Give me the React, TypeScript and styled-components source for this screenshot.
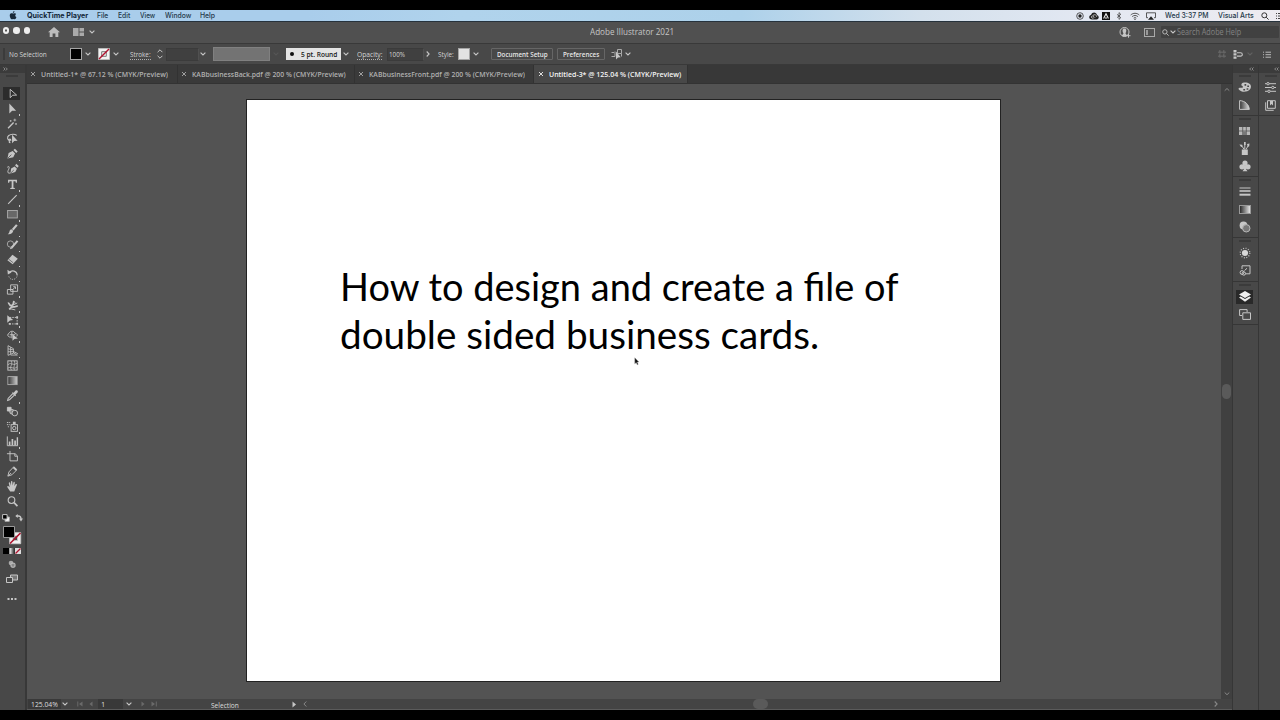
import React, { ReactNode, useLayoutEffect, useRef, useState } from 'react';
import styled, { createGlobalStyle, css } from 'styled-components';

const Global = createGlobalStyle`
  * { box-sizing: border-box; }
  html, body { margin: 0; background: #000; }
  body { width: 1280px; height: 720px; overflow: hidden; font-family: "Open Sans", "Liberation Sans", sans-serif; }
  svg { display: block; flex: none; }
`;

const ui = '"Open Sans", "Liberation Sans", sans-serif';
const system = 'Inter, "Liberation Sans", sans-serif';

/* ---------- text that is set to a fixed measure ---------- */
const Measure = styled.span<{ $w: number }>`
  display: block;
  flex: none;
  width: ${(p) => p.$w}px;
  white-space: nowrap;
`;
const Stretch = styled.span`
  display: inline-block;
  transform-origin: 0 50%;
`;
function Fit({ width, children }: { width: number; children: ReactNode }) {
  const ref = useRef<HTMLSpanElement>(null);
  const [scale, setScale] = useState(1);
  useLayoutEffect(() => {
    if (ref.current) setScale(width / ref.current.offsetWidth);
  }, [width, children]);
  return (
    <Measure $w={width}>
      <Stretch ref={ref} style={{ transform: `scaleX(${scale})` }}>{children}</Stretch>
    </Measure>
  );
}

/* ---------- frame ---------- */
const Screen = styled.div`
  width: 1280px;
  height: 720px;
  padding: 10px 0;
  background: #000;
  overflow: hidden;
`;
const Desktop = styled.div`
  height: 700px;
  display: flex;
  flex-direction: column;
  background: #484848;
`;
const Bar = styled.div`
  display: flex;
  align-items: center;
  flex: none;
  overflow: hidden;
`;
const MenuBar = styled(Bar)`
  height: 12px;
  padding: 0 0 0 9px;
  font: 500 7.3px/10px ${system};
  color: #24384a;
  background: linear-gradient(90deg, #a9cdeb 0, #a9cdeb 24%, #b0d3ec 36%, #add1ea 58%, #d3e0ec 72%, #e3e8f2 85%, #edebf0 100%);
  border-bottom: 1px solid #26323c;
`;
const TitleBar = styled(Bar)`
  height: 22px;
  padding: 0 0 1px 3px;
  background: #505050;
  border-bottom: 1px solid #393939;
  color: #c6c6c6;
  font: 400 8.6px/12px ${ui};
`;
const ControlBar = styled(Bar)`
  height: 21px;
  padding-left: 3px;
  background: #484848;
  border-bottom: 1px solid #393939;
  color: #d4d4d4;
  font: 500 7.5px/10px ${ui};
`;
const Slot = styled.div<{ $w: number; $pad?: number }>`
  flex: none;
  display: flex;
  align-items: center;
  width: ${(p) => p.$w}px;
  padding-left: ${(p) => p.$pad ?? 0}px;
`;
const Spacer = styled.div`
  flex: 1;
`;
const Strong = styled.b`
  font-weight: 700;
  color: #14283a;
`;
const Light = styled.i<{ $dot?: boolean }>`
  width: 6.4px;
  height: 6.4px;
  margin: 0 3.9px 3px 0;
  border-radius: 50%;
  background: ${(p) => (p.$dot ? 'radial-gradient(circle, #555 0 .8px, #efefef 1.4px)' : '#ededed')};
`;
const SearchBox = styled.div`
  display: flex;
  align-items: center;
  width: 118px;
  height: 12px;
  padding-left: 1px;
  background: #414141;
  border-radius: 1px;
  color: #838383;
`;

/* ---------- control bar parts ---------- */
const Swatch = styled.div<{ $color: string }>`
  width: 12px;
  height: 12px;
  background: ${(p) => p.$color};
  border: 1px solid #a5a5a5;
  flex: none;
`;
const Field = styled.div<{ $w: number }>`
  width: ${(p) => p.$w}px;
  height: 13px;
  line-height: 11px;
  padding-left: 1px;
  flex: none;
  background: #404040;
  border: 1px solid #3b3b3b;
  border-right-color: #505050;
`;
const Profile = styled.div`
  width: 57px;
  height: 14px;
  background: #737373;
  border: 1px solid #808080;
`;
const Brush = styled.div`
  display: flex;
  align-items: center;
  width: 55px;
  height: 12px;
  padding-left: 4px;
  background: #e4e4e4;
  color: #161616;
  font-weight: 600;
  gap: 7px;
  &::before { content: ''; width: 4px; height: 4px; border-radius: 50%; background: #111; }
`;
const Underlined = styled.span`
  display: block;
  margin-top: 1px;
  border-bottom: 1px dotted #b0b0b0;
  line-height: 9px;
`;
const PushButton = styled.div<{ $w: number }>`
  flex: none;
  display: flex;
  align-items: center;
  justify-content: center;
  width: ${(p) => p.$w}px;
  height: 12px;
  margin-right: 4px;
  border: 1px solid #666;
  border-radius: 1px;
  color: #e6e6e6;
  font-weight: 600;
`;
const Grip = styled.i<{ $vertical?: boolean }>`
  display: block;
  flex: none;
  background: #3b3b3b;
  ${(p) => (p.$vertical ? css`width: 2px; height: 12px;` : css`width: 12px; height: 2px;`)}
`;

/* ---------- workspace ---------- */
const Workspace = styled.div`
  flex: 1;
  min-height: 0;
  display: flex;
`;
const Toolbox = styled.div`
  width: 27px;
  flex: none;
  background: #484848;
  border-right: 2px solid #383838;
`;
const DockHead = styled.div`
  height: 8px;
  display: flex;
  align-items: center;
  justify-content: flex-end;
  background: #3b3b3b;
`;
const GripRow = styled.div<{ $h: number; $shift?: number }>`
  height: ${(p) => p.$h}px;
  padding: 2px 0 0 ${(p) => p.$shift ?? 0}px;
`;
const Tool = styled.div<{ $active?: boolean }>`
  position: relative;
  width: 18px;
  height: 15.15px;
  margin-left: 3px;
  display: flex;
  align-items: center;
  justify-content: center;
  background: ${(p) => (p.$active ? 'linear-gradient(#2c2c2c, #2c2c2c) 0 1px / 17px 13px no-repeat' : 'none')};
`;
const Corner = styled.i`
  position: absolute;
  right: 1px;
  bottom: 0;
  width: 1.5px;
  height: 1.5px;
  background: #c8c8c8;
`;
const ColorArea = styled.div`
  display: flex;
  flex-direction: column;
`;
const ColorRow = styled.div<{ $h: number; $pad: number }>`
  display: flex;
  align-items: center;
  height: ${(p) => p.$h}px;
  padding-left: ${(p) => p.$pad}px;
`;
const Document = styled.div`
  width: 1205px;
  flex: none;
  display: flex;
  flex-direction: column;
`;
const Tabs = styled.div`
  height: 19px;
  flex: none;
  display: flex;
  background: #383838;
  border-bottom: 1px solid #333;
`;
const Tab = styled.div<{ $w: number; $active?: boolean }>`
  flex: none;
  display: flex;
  align-items: center;
  width: ${(p) => p.$w}px;
  padding: 0 0 1px ${(p) => (p.$active ? 4 : 3)}px;
  gap: 5px;
  border-right: 1px solid #323232;
  background: ${(p) => (p.$active ? '#484848' : '#3a3a3a')};
  color: ${(p) => (p.$active ? '#f4f4f4' : '#b0b0b0')};
  font: 600 7.2px/10px ${ui};
`;
const View = styled.div`
  flex: 1;
  min-height: 0;
  display: flex;
`;
const Pasteboard = styled.div`
  width: 1194px;
  padding: 15px 0 0 219px;
  background: #535353;
`;
const Artboard = styled.div`
  position: relative;
  width: 755px;
  height: 583px;
  padding: 162px 0 0 93px;
  background: #fff;
  border: 1px solid #222;
`;
const Headline = styled.div`
  color: #000;
  font: 400 39px/48px Lato, "Noto Sans", sans-serif;
`;
const Pointer = styled.div`
  position: absolute;
  left: 387px;
  top: 257px;
`;
const VScroll = styled.div`
  width: 11px;
  display: flex;
  flex-direction: column;
  align-items: center;
  justify-content: space-between;
  padding: 3px 0;
  background: #404040;
`;
const Thumb = styled.div<{ $w: number; $h: number }>`
  width: ${(p) => p.$w}px;
  height: ${(p) => p.$h}px;
  flex: none;
  border-radius: 5px;
  background: #5a5a5a;
`;
const Status = styled(Bar)`
  height: 11px;
  background: #444;
  border-bottom: 1px solid #5b5b5b;
  color: #ddd;
  font: 500 7.3px/9px ${ui};
`;
const StatusField = styled.div<{ $w: number }>`
  flex: none;
  width: ${(p) => p.$w}px;
  height: 10px;
  padding: 1px 0 0 3px;
  background: #393939;
`;
const StatusItem = styled.div`
  padding-top: 2px;
`;
const Dock = styled.div<{ $w: number }>`
  flex: none;
  width: ${(p) => p.$w}px;
  background: #484848;
  border-left: 1px solid #363636;
`;
const Group = styled.div<{ $h: number; $shift?: number }>`
  display: flex;
  flex-direction: column;
  align-items: center;
  height: ${(p) => p.$h}px;
  padding: 2px 2px 0 ${(p) => p.$shift ?? 0}px;
  border-bottom: 1px solid #363636;
`;
const PanelButton = styled.div<{ $active?: boolean }>`
  display: flex;
  align-items: center;
  justify-content: center;
  width: 17px;
  height: 14px;
  margin-top: 3.7px;
  background: ${(p) => (p.$active ? '#292929' : 'none')};
`;

/* ---------- drawings ---------- */
const C = '#c6c6c6';
function Ico({ w = 14, h = 14, vb, children, color = C }: { w?: number; h?: number; vb?: string; children: ReactNode; color?: string }) {
  return (
    <svg width={w} height={h} viewBox={vb ?? `0 0 ${w} ${h}`} fill="none" stroke={color} strokeWidth="1">
      {children}
    </svg>
  );
}
const F = ({ d, c = C }: { d: string; c?: string }) => <path d={d} fill={c} stroke="none" />;
const Down = ({ c = C }: { c?: string }) => <Ico w={6} h={4} color={c}><path d="M.6.6 3 3 5.4.6" strokeWidth="1.1" /></Ico>;
const Right = ({ c = C }: { c?: string }) => <Ico w={4} h={6} color={c}><path d="M.7.5 3.1 3 .7 5.5" strokeWidth="1.1" /></Ico>;
const Left = ({ c = C }: { c?: string }) => <Ico w={4} h={6} color={c}><path d="M3.3.5.9 3l2.4 2.5" /></Ico>;
const Close = ({ c = C }: { c?: string }) => <Ico w={6} h={6} color={c}><path d="m1 1 4 4M5 1 1 5" strokeWidth=".9" /></Ico>;
const Collapse = () => <Ico w={5} h={4} color="#aaa"><path d="M2.2.5.7 2l1.5 1.5M4.5.5 3 2l1.5 1.5" strokeWidth=".7" /></Ico>;

const tools: { icon: ReactNode; more?: boolean }[] = [
  { icon: <path d="M4.5 2.5v9l2.7-2.6 4.2-.2z" /> },
  { more: true, icon: <F d="M3.6 1.5v10.8l3-2.8 4.3-.1z" /> },
  { icon: <><path d="m2.2 12 6-6" strokeWidth="1.5" /><path d="M9.5 1.8v3M8 3.3h3M5 3.2v2M4 4.2h2M10.8 6.5v2M9.8 7.5h2" strokeWidth=".8" /></> },
  { icon: <><path d="M4.500 9.400C1.400 8.800.9 5.500 3 3.800s6.500-1.900 8.600-.1M4.500 9.400c-1.500.6-1.500 2 .2 2M5 9.500c.8-1.600-1.400-2.500-1.800-1" strokeWidth="1.2" /><F d="M6.500 3v9.200l2.400-2.500 3.600-.2z" /></> },
  { more: true, icon: <><F d="m1.600 12.400 1.200-6 4.400-2.100 2.600 2.700-2 4.100zM8 3.300l1.600-1.500 3 3.100L11 6.400z" /><path d="m2.200 11.800 3.600-3.500" stroke="#444" strokeWidth=".8" /></> },
  { icon: <><F d="m4.800 12.300.7-5.200 3.800-2.300 2.500 2.400-1.800 3.600zM9.800 3.900l1.200-2 2.700 2.500-1.400 1.800z" /><path d="m5.400 11.600 3-3" stroke="#444" strokeWidth=".8" /><path d="M1.300 5.800c3-2.600 2.300 1 1 3.400-1 2 .3 3.700 2.400 2.500" /></> },
  { more: true, icon: <F d="M2.200 2h9.600v3h-1.200l-.4-1.500H8v7l1.500.4v1H4.600v-1l1.500-.4v-7H3.800L3.400 5H2.200z" /> },
  { more: true, icon: <path d="m2.300 11.600 9.200-9.200" strokeWidth="1.2" /> },
  { more: true, icon: <rect x="1.700" y="2.700" width="10.500" height="8" fill="#686868" stroke="#aaa" /> },
  { more: true, icon: <><path d="M11.700 2 7.200 7.300" strokeWidth="2.3" /><F d="m5.800 6.600 2 1.800c-.6 2.700-2.300 3.900-6 3.600 1.200-.6 1.600-1.700 2-3.200.3-1.200 1-2 2-2.200z" /></> },
  { more: true, icon: <><circle cx="4.800" cy="6.500" r="3.400" stroke="#aaa" /><path d="M12.400 3 6 10.600" strokeWidth="2.2" /><F d="m5.200 9.800 1.600 1.400-2.600 1z" /></> },
  { more: true, icon: <><F d="m7 1.800 5.700 4.400-5.500 6-5.700-4.500z" /><path d="m2.700 6.500 5 4" stroke="#444" strokeWidth=".7" /></> },
  { more: true, icon: <><path d="M3.400 5C6.400 1.500 11.700 3.300 12 7.500" strokeWidth="1.2" /><path d="M12 8c-.3 5-7.800 6.100-9 .8" strokeDasharray="1 1.3" /><F d="m1.500 2 .5 5L6 4.900z" /></> },
  { more: true, icon: <path d="M5 2h7.500v7H5zM1.500 7h6v5h-6zM6.800 7.500l3-3M7.800 4h2.400v2.400" /> },
  { more: true, icon: <><path d="M2 4.500c2.300-.6 1.200 3.500 4 2.600C8.400 6.200 8.200 4 8.400 2M4 11.700c0-2.700 2.600-3.400 4.700-3.200 1.900.2 1.700-1 4-.7" strokeWidth="1.8" /><path d="m8.800 3 1.700 1.600M3 10l7 1.800M7.500 6.500l4.600-2.200" /></> },
  { more: true, icon: <><path d="M4 3.700h8v7H4" strokeDasharray="1.7 1" /><F d="M1.400 1.300v8L4.200 7l3.500-.6zM11 2.500h2v2h-2zM11 9.700h2v2h-2zM3 9.700h2v2H3z" /></> },
  { more: true, icon: <><path d="M5.200 8.700C1.600 9 .9 5.500 3.400 4.500 4.200 2 8.800 1.500 9.400 4.400c2.500.2 3.300 2.200 2.100 3.600M4 6.200h6M6.300 3v7" /><F d="M7 5.700v7l2.100-2 3.700-.4z" /></> },
  { more: true, icon: <path d="M2.200 1.800v10.400M2.200 1.800 8 5v4.800L2.200 12.200M2.200 5.200 8 6.300M2.200 8.400 8 8.200M5 3.400v7.500M8 8l4.800 2.500M8 9.500l3.500 2M5 11.900h7.500" strokeWidth=".9" /> },
  { icon: <><rect x="2" y="2" width="10" height="10" /><path d="M2 6.500C5 2.500 7 8 12 4.500M2 10c3-3 6 2 10-1.500M5.500 2C8 6 3 8.500 6 12M9 2c2 4-2 6 0 10" strokeWidth=".8" /></> },
  { icon: <><defs><linearGradient id="tg"><stop stopColor="#333" /><stop offset="1" stopColor="#ccc" /></linearGradient></defs><rect x="2" y="2.800" width="10" height="8.600" fill="url(#tg)" stroke="#aaa" /></> },
  { more: true, icon: <><path d="m7.300 5-5 5.200-.5 2 2-.6L9 6.600" strokeWidth="1.2" /><F d="m6.300 4.400 1-1 .9.6 1.900-2.200c2-1.200 3.500 1 2.200 2.200l-2 1.900.5 1-1 1z" /></> },
  { icon: <><path d="M1.500 2.500h4v4h-4z" fill={C} /><circle cx="6.500" cy="7.300" r="2.500" fill="#888" /><circle cx="9.500" cy="8.700" r="3" fill="#4c4c4c" /></> },
  { more: true, icon: <><rect x="5.500" y="5" width="6.800" height="7.200" /><circle cx="8.900" cy="8.700" r="1.800" /><F d="M7.400 2h3v2.500h-3z" /><path d="M1 2.700h4M1 5h3M2 7.300h1.600" strokeDasharray="1.2 .7" /></> },
  { more: true, icon: <><F d="M3 7h1.800v4H3zM6 4.400h1.800V11H6zM8.900 6h1.800v5H8.900zM11.500 2.500h1.500V11h-1.500z" /><path d="M1.400 1.500v10H13" /></> },
  { icon: <><path d="M4.300 1v10.700h8V6.300L9.800 4H1" /><path d="M9.500 4.200v2.500h2.600" /></> },
  { more: true, icon: <><path d="m2 12 1.200-4.600 5-5.300 3.400 3.200-5.200 5.200z" /><path d="m8 2.400 3.200 3" strokeWidth="2" /><path d="m2.500 11.600 3-3" /></> },
  { more: true, icon: <F d="M4.500 12.500 1.500 7.700c-.4-1 .7-1.500 1.400-.8l1 1L3 3.500c-.1-1.200 1.200-1.400 1.500-.3l.8 2.900V2c0-1.300 1.500-1.300 1.600 0l.2 4 .9-3.300c.3-1.100 1.600-.8 1.500.3L9 6.600l1.300-2c.7-.9 1.800-.2 1.400.8l-2 4.700-.8 2.400z" /> },
  { icon: <><circle cx="5.900" cy="5.500" r="3.600" strokeWidth="1.2" /><path d="m8.700 8.300 3.600 3.600" strokeWidth="1.8" /></> },
];

const Magnifier = ({ c = C, s = 8 }: { c?: string; s?: number }) => (
  <Ico w={s} h={s} vb="0 0 8 8" color={c}><circle cx="3.300" cy="3.300" r="2.500" /><path d="m5.200 5.200 2.400 2.400" /></Ico>
);
const NoneSwatch = () => (
  <Ico w={12} h={12} color="#777"><path d="M.5.5h11v11H.5z" fill="#f2f2f2" stroke="#bbb" /><path d="M3.700 3.700h4.600v4.600H3.700z" /><path d="M1 11 11 1" stroke="#b0122e" strokeWidth="1.500" /></Ico>
);

function SystemMenu() {
  return (
    <MenuBar>
      <Slot $w={18}><Ico w={8} h={9}><F c="#17293a" d="M5.400 0c.1 1.100-.6 1.900-1.500 1.900C3.800.9 4.500.2 5.400 0M4 2.500c.7 0 1-.4 1.800-.3.6.1 1 .3 1.300.8-1.300.8-1 2.500.3 3C7 7.300 6.400 8.300 5.700 8.300c-.6 0-.9-.3-1.500-.3s-1 .3-1.500.3C1.400 8.300-.3 3.800 1.600 2.600 2.500 2 3.200 2.500 4 2.500" /></Ico></Slot>
      <Slot $w={70}><Strong><Fit width={61}>QuickTime Player</Fit></Strong></Slot>
      <Slot $w={21}><Fit width={11}>File</Fit></Slot>
      <Slot $w={22}><Fit width={12}>Edit</Fit></Slot>
      <Slot $w={25}><Fit width={15}>View</Fit></Slot>
      <Slot $w={35}><Fit width={26}>Window</Fit></Slot>
      <Slot $w={30}><Fit width={15}>Help</Fit></Slot>
      <Spacer />
      <Slot $w={13}><Ico w={8} h={8} color="#333"><circle cx="4" cy="4" r="3.300" strokeWidth=".8" /><circle cx="4" cy="4" r="1.700" fill="#222" stroke="none" /></Ico></Slot>
      <Slot $w={13}><Ico w={10} h={8}><F c="#222" d="M3 7.500C-.6 7.500-.5 3.500 2 3c1-3.400 5.500-3.200 6 0 2.600 1 2.200 4.500-.5 4.500z" /><path d="M4.800 5.800c-1 .8-2.400.3-2.400-.8s1.400-1.600 2.600-.3l1 1M4 3.400c1.300-1.400 3.900-.5 3.700 1.400" stroke="#eee" strokeWidth=".7" /></Ico></Slot>
      <Slot $w={14}><Ico w={8} h={8}><F c="#111" d="M0 0h8v8H0z" /><path d="M1.600 6.400 4 1.800l2.400 4.600M3 6h2" stroke="#eee" strokeWidth="1.100" /></Ico></Slot>
      <Slot $w={14}><Ico w={6} h={8} color="#333"><path d="m1 2.300 3.800 3.400L3 7.400V.6l1.800 1.700L1 5.700" strokeWidth=".7" /></Ico></Slot>
      <Slot $w={16}><Ico w={10} h={8} color="#444"><path d="M.7 3c2.500-2.300 6.100-2.300 8.600 0M2.200 4.600c1.700-1.500 3.900-1.500 5.600 0M3.700 6.100c.8-.7 1.800-.7 2.600 0" strokeWidth=".9" /><circle cx="5" cy="7.200" r=".7" fill="#333" stroke="none" /></Ico></Slot>
      <Slot $w={19}><Ico w={10} h={8} color="#333"><path d="M2 5.700H.5V.8h9v4.900H8" strokeWidth=".8" /><F c="#222" d="m5 4.300 3 3.500H2z" /></Ico></Slot>
      <Slot $w={53}><Fit width={44}>Wed 3:37 PM</Fit></Slot>
      <Slot $w={43}><Fit width={36}>Visual Arts</Fit></Slot>
      <Slot $w={15}><Magnifier c="#333" /></Slot>
      <Slot $w={4}><Ico w={4} h={8} color="#444"><path d="M0 1.500h1M2 1.500h2M0 4h1M2 4h2M0 6.500h1M2 6.500h2" /></Ico></Slot>
    </MenuBar>
  );
}

function WindowTitle() {
  return (
    <TitleBar>
      <Slot $w={45}><Light $dot /><Light /><Light /></Slot>
      <Slot $w={25}><Ico w={12} h={10}><F d="M6 0 12 5.200h-1.700V10H7.400V6.600H4.600V10H1.700V5.200H0z" c="#bcbcbc" /></Ico></Slot>
      <Slot $w={16}><Ico w={11} h={8}><F c="#aaa" d="M0 0h5.500v8H0zM6.500 0H11v3.500H6.500zM6.500 4.500H11V8H6.500z" /></Ico></Slot>
      <Slot $w={501}><Down /></Slot>
      <Fit width={84}>Adobe Illustrator 2021</Fit>
      <Spacer />
      <Slot $w={25}><Ico w={12} h={11}><circle cx="5.500" cy="5" r="4.500" /><F d="M2.800 8.600 4.500 6.500C2.500 3 4.300 1.400 5.500 1.600c1.500.1 2.600 1.700 1 4.900l1.700 2.100-1.500 1H4z" /><path d="M9.500 6.700v4M7.500 8.700h4" /></Ico></Slot>
      <Slot $w={17}><Ico w={11} h={9} color="#aaa"><rect x=".5" y=".5" width="10" height="8" /><F c="#999" d="M2 2h2v5H2z" /></Ico></Slot>
      <SearchBox>
        <Slot $w={8}><Magnifier s={7} /></Slot>
        <Slot $w={7}><Down /></Slot>
        <Fit width={64}>Search Adobe Help</Fit>
      </SearchBox>
      <Slot $w={1} />
    </TitleBar>
  );
}

function Controls() {
  return (
    <ControlBar>
      <Slot $w={6}><Grip $vertical /></Slot>
      <Slot $w={61}><Fit width={38}>No Selection</Fit></Slot>
      <Slot $w={15}><Swatch $color="#000" /></Slot>
      <Slot $w={13}><Down /></Slot>
      <Slot $w={15}><NoneSwatch /></Slot>
      <Slot $w={17}><Down /></Slot>
      <Slot $w={27}><Underlined><Fit width={21}>Stroke:</Fit></Underlined></Slot>
      <Slot $w={9}><Ico w={6} h={10}><path d="M.6 3.200 3 .8l2.400 2.400M.6 6.800 3 9.200l2.400-2.400" /></Ico></Slot>
      <Slot $w={34}><Field $w={33} /></Slot>
      <Slot $w={13}><Down /></Slot>
      <Slot $w={60}><Profile /></Slot>
      <Slot $w={13}><Down c="#555" /></Slot>
      <Slot $w={57}><Brush><Fit width={36}>5 pt. Round</Fit></Brush></Slot>
      <Slot $w={14}><Down /></Slot>
      <Slot $w={30}><Underlined><Fit width={25}>Opacity:</Fit></Underlined></Slot>
      <Slot $w={39}><Field $w={37}><Fit width={16}>100%</Fit></Field></Slot>
      <Slot $w={12}><Right /></Slot>
      <Slot $w={20}><Fit width={16}>Style:</Fit></Slot>
      <Slot $w={15}><Swatch $color="#e2e2e2" /></Slot>
      <Slot $w={18}><Down /></Slot>
      <PushButton $w={62}><Fit width={51}>Document Setup</Fit></PushButton>
      <PushButton $w={48}><Fit width={36}>Preferences</Fit></PushButton>
      <Slot $w={16} $pad={2}><Ico w={12} h={11} color="#aaa"><path d="M.5 3.500H3m-2.500 4H4M4 2.500v5M6.500.5h4v4h-4zM10.500 4.500v3" /><F d="M5 2.500v8l2-2 2.700-.2z" /></Ico></Slot>
      <Slot $w={10}><Down /></Slot>
      <Spacer />
      <Slot $w={15}><Ico w={8} h={8} color="#777"><path d="M1 1h2v2H1zM5 1h2v2H5zM1 5h2v2H1zM5 5h2v2H5z" strokeDasharray="1 .5" /></Ico></Slot>
      <Slot $w={14}><Ico w={10} h={9}><F d="M.5 0h3v2.400h-3zM.5 3.200h3v2.400h-3zM.5 6.400h3v2.400h-3z" /><path d="M4 2.700h3.500q1.800 0 1.800 1.700T7.500 6.100H4" strokeWidth="1.100" /></Ico></Slot>
      <Slot $w={16}><Down c="#626262" /></Slot>
      <Slot $w={17}><Ico w={8} h={7} color="#bbb"><path d="M0 1.200h1M2.500 1.200H8M0 3.700h1M2.500 3.700H8M0 6.200h1M2.500 6.200H8" /></Ico></Slot>
    </ControlBar>
  );
}

function ToolColumn() {
  return (
    <Toolbox>
      <DockHead><Slot $w={22}><Ico w={5} h={4} color="#aaa"><path d="M.5.5 2 2 .5 3.500M2.800.5 4.300 2 2.800 3.500" strokeWidth=".7" /></Ico></Slot></DockHead>
      <GripRow $h={12.6} $shift={6}><Grip /></GripRow>
      {tools.map((t, i) => (
        <Tool key={i} $active={i === 0}>
          <Ico w={13} h={13} vb="0 0 14 14">{t.icon}</Ico>
          {t.more && <Corner />}
        </Tool>
      ))}
      <ColorArea>
        <ColorRow $h={17} $pad={2}>
          <Slot $w={13}><Ico w={8} h={8}><path d="M3 3h4.300v4.300H3z" fill="#fff" stroke="#aaa" /><path d="M.6.6h4.500v4.500H.6z" fill="#000" /></Ico></Slot>
          <Ico w={8} h={8}><path d="M2 2h1.500q2.500 0 2.500 3" strokeWidth="1.300" /><F d="M2.700 0v4L.3 2zM4 4.500h4L6 7.500z" /></Ico>
        </ColorRow>
        <ColorRow $h={18} $pad={3}>
          <Ico w={19} h={19}>
            <path d="M6.700 6.700h11v11h-11z" fill="#f2f2f2" stroke="#c8c8c8" /><path d="M10 10h4.500v4.500H10z" fill="#474747" /><path d="M7 17.500 17.500 7" stroke="#b0122e" strokeWidth="1.600" />
            <path d="M.5.5h11v11H.5z" fill="#000" stroke="#999" />
          </Ico>
        </ColorRow>
        <ColorRow $h={13} $pad={3}>
          <Ico w={18} h={6}><defs><linearGradient id="cm"><stop stopColor="#fff" /><stop offset="1" stopColor="#222" /></linearGradient></defs><F c="#000" d="M0 0h6v6H0z" /><path d="M6.500 0h5v6h-5z" fill="url(#cm)" stroke="none" /><F c="#ddd" d="M12 0h6v6h-6z" /><path d="m12.500 5.500 5-5" stroke="#b0122e" strokeWidth="1.300" /></Ico>
        </ColorRow>
        <ColorRow $h={12} $pad={8}><Ico w={8} h={8}><circle cx="3" cy="3" r="2.300" fill="#aaa" stroke="none" /><rect x="3" y="3.200" width="4" height="4" rx="1" fill="#888" /></Ico></ColorRow>
        <ColorRow $h={18} $pad={6}><Ico w={12} h={10}><path d="M4.500 1h7v5h-7z" fill="#777" /><path d="M.5 3.500h6v5h-6z" fill="#4a4a4a" /></Ico></ColorRow>
        <ColorRow $h={23} $pad={7}><Ico w={10} h={4}><F d="M.5 1h2v2h-2zM4 1h2v2H4zM7.500 1h2v2h-2z" /></Ico></ColorRow>
      </ColorArea>
    </Toolbox>
  );
}

const tabs = [
  { w: 151, text: 127, title: 'Untitled-1* @ 67.12 % (CMYK/Preview)' },
  { w: 177, text: 154, title: 'KABbusinessBack.pdf @ 200 % (CMYK/Preview)' },
  { w: 179, text: 156, title: 'KABbusinessFront.pdf @ 200 % (CMYK/Preview)' },
  { w: 154, text: 132, title: 'Untitled-3* @ 125.04 % (CMYK/Preview)', active: true },
];

function DocumentWindow() {
  return (
    <Document>
      <Tabs>
        {tabs.map((t) => (
          <Tab key={t.title} $w={t.w} $active={t.active}>
            <Close c={t.active ? '#eee' : '#aaa'} />
            <Fit width={t.text}>{t.title}</Fit>
          </Tab>
        ))}
      </Tabs>
      <View>
        <Pasteboard>
          <Artboard>
            <Headline>
              <Fit width={559}>How to design and create a file of</Fit>
              <Fit width={479}>double sided business cards.</Fit>
            </Headline>
            <Pointer><Ico w={6} h={9}><path d="M.8.8v6l1.400-1.300 1 2.300 1-.5-1-2.200h1.700z" fill="#111" stroke="#999" strokeWidth=".4" /></Ico></Pointer>
          </Artboard>
        </Pasteboard>
        <VScroll>
          <Ico w={6} h={5} color="#999"><path d="M.7 3.700 3 1.500l2.300 2.200" strokeWidth=".8" /></Ico>
          <Thumb $w={9} $h={15} />
          <Ico w={6} h={5} color="#999"><path d="M.7 1.500 3 3.700l2.300-2.200" strokeWidth=".8" /></Ico>
        </VScroll>
      </View>
      <Status>
        <Slot $w={35} $pad={1}><StatusField $w={33}><Fit width={27}>125.04%</Fit></StatusField></Slot>
        <Slot $w={15}><Down /></Slot>
        <Slot $w={12}><Ico w={6} h={6} color="#6a6a6a"><path d="M.8.5v5" /><F c="#6a6a6a" d="M5.500.5v5L2 3z" /></Ico></Slot>
        <Slot $w={9}><Ico w={4} h={6}><F c="#6a6a6a" d="M3.500.5v5L.5 3z" /></Ico></Slot>
        <Slot $w={28}><StatusField $w={25}><Fit width={4}>1</Fit></StatusField></Slot>
        <Slot $w={15}><Down /></Slot>
        <Slot $w={10}><Ico w={4} h={6}><F c="#6a6a6a" d="M.5.5v5l3-2.500z" /></Ico></Slot>
        <Slot $w={60}><Ico w={6} h={6} color="#6a6a6a"><path d="M5.300.5v5" /><F c="#6a6a6a" d="M.5.5v5L4 3z" /></Ico></Slot>
        <Slot $w={81}><StatusItem><Fit width={28}>Selection</Fit></StatusItem></Slot>
        <Slot $w={11}><Ico w={4} h={7}><F d="M.5.5v6l3.500-3z" /></Ico></Slot>
        <Slot $w={450}><Left c="#888" /></Slot>
        <Thumb $w={15} $h={10} />
        <Slot $w={446} />
        <Right c="#888" />
      </Status>
    </Document>
  );
}

const GradBox = () => (
  <Ico w={12} h={9}><defs><linearGradient id="pg"><stop stopColor="#222" /><stop offset="1" stopColor="#eee" /></linearGradient></defs><rect x=".5" y=".5" width="11" height="8" fill="url(#pg)" stroke="#999" /></Ico>
);

function Docks() {
  return (
    <>
      <Dock $w={26}>
        <DockHead><Slot $w={9}><Collapse /></Slot></DockHead>
        <Group $h={43}><Grip />
          <PanelButton><Ico w={13} h={11}><F d="M6 .6c6.500-.4 8.500 3.700 5.800 7-2.300 2.500-7.300 3-9.800 1C-.7 6.600.8 5.500 3 5.800 5.500 6.200 5.300 4 3.500 3.600 3 2 4 .8 6 .6" /><F c="#484848" d="M6.500 2h1.700v1.700H6.500zM9.300 3.500H11v1.600H9.300zM8.600 6.300h1.700v1.500H8.600zM5.300 7h1.800v1.400H5.300z" /></Ico></PanelButton>
          <PanelButton><Ico w={11} h={10}><defs><linearGradient id="guide"><stop stopColor="#333" /><stop offset="1" stopColor="#ddd" /></linearGradient></defs><path d="M.6.6C6 .8 10 4.500 10.300 9.400H.6z" fill="url(#guide)" /></Ico></PanelButton>
        </Group>
        <Group $h={61}><Grip />
          <PanelButton><Ico w={11} h={8}><F d="M0 0h11v8H0z" c="#b8b8b8" /><path d="M0 4h11M3.700 0v8M7.300 0v8" stroke="#484848" strokeWidth=".7" /><F c="#777" d="M4 4.400h3V8H4z" /></Ico></PanelButton>
          <PanelButton><Ico w={11} h={13}><F d="M2.800 7.500h6V13h-6zM.4 2.500l2.800.3.600 2-1.700.3zM5 0h1.700v3H5zM8 2l2.500-.6-.3 2.800-1.500.8z" /><path d="m3.200 4.500 2 3M5.800 2.500v5M9 4 7 7.500" /></Ico></PanelButton>
          <PanelButton><Ico w={12} h={12}><circle cx="6" cy="3" r="2.600" fill={C} stroke="none" /><circle cx="3" cy="6.800" r="2.600" fill={C} stroke="none" /><circle cx="9" cy="6.800" r="2.600" fill={C} stroke="none" /><F d="M5.200 4h1.600l.4 5.500 1.300 1.700h-5l1.300-1.700z" /></Ico></PanelButton>
        </Group>
        <Group $h={61}><Grip />
          <PanelButton><Ico w={12} h={9}><path d="M.5 1h11" strokeWidth="1" /><path d="M.5 4h11" strokeWidth="1.600" /><path d="M.5 7.700h11" strokeWidth="2" /></Ico></PanelButton>
          <PanelButton><GradBox /></PanelButton>
          <PanelButton><Ico w={12} h={12}><circle cx="4.500" cy="4.500" r="3.900" fill={C} stroke="none" /><circle cx="7.300" cy="7.300" r="3.700" fill="#777" stroke="#b8b8b8" /></Ico></PanelButton>
        </Group>
        <Group $h={44}><Grip />
          <PanelButton><Ico w={12} h={12}><circle cx="6" cy="6" r="3.100" fill="#d8d8d8" stroke="none" /><circle cx="6" cy="6" r="4.800" strokeWidth="1.200" strokeDasharray="1 1.510" /></Ico></PanelButton>
          <PanelButton><Ico w={12} h={11}><path d="M3 4V.8h8v8H6.500" /><circle cx="3" cy="7.500" r="1.900" /><circle cx="4.800" cy="8.500" r="1.700" /><path d="M5.500 5.500 8 3.300" /></Ico></PanelButton>
        </Group>
        <Group $h={43}><Grip />
          <PanelButton $active><Ico w={12} h={12}><F d="m6 0 6 3.500L6 7 0 3.500z" c="#eee" /><F d="m0 6.600 1.700-1L6 8l4.300-2.400 1.700 1L6 10.800z" c="#eee" /></Ico></PanelButton>
          <PanelButton><Ico w={12} h={11}><path d="M3 6.500H.6V.6h7.500V3" /><path d="M3.800 3.800h7.700v6.600H3.800z" /></Ico></PanelButton>
        </Group>
      </Dock>
      <Dock $w={22}>
        <DockHead><Slot $w={6}><Collapse /></Slot></DockHead>
        <Group $h={43} $shift={4}><Grip />
          <PanelButton><Ico w={11} h={11}><path d="M0 1.700h11M0 5.500h11M0 9.300h11" /><circle cx="3" cy="1.700" r="1.200" fill="#484848" /><circle cx="7.800" cy="5.500" r="1.200" fill="#484848" /><circle cx="4" cy="9.300" r="1.200" fill="#484848" /></Ico></PanelButton>
          <PanelButton><Ico w={11} h={11}><path d="M2.500.7h7.800v7.600H2.500z" /><path d="M.7 2.300v8h8" /><F d="M5 1h3v4.500L6.500 4 5 5.500z" /></Ico></PanelButton>
        </Group>
      </Dock>
    </>
  );
}

export default function App() {
  return (
    <>
      <Global />
      <Screen>
        <Desktop>
          <SystemMenu />
          <WindowTitle />
          <Controls />
          <Workspace>
            <ToolColumn />
            <DocumentWindow />
            <Docks />
          </Workspace>
        </Desktop>
      </Screen>
    </>
  );
}
